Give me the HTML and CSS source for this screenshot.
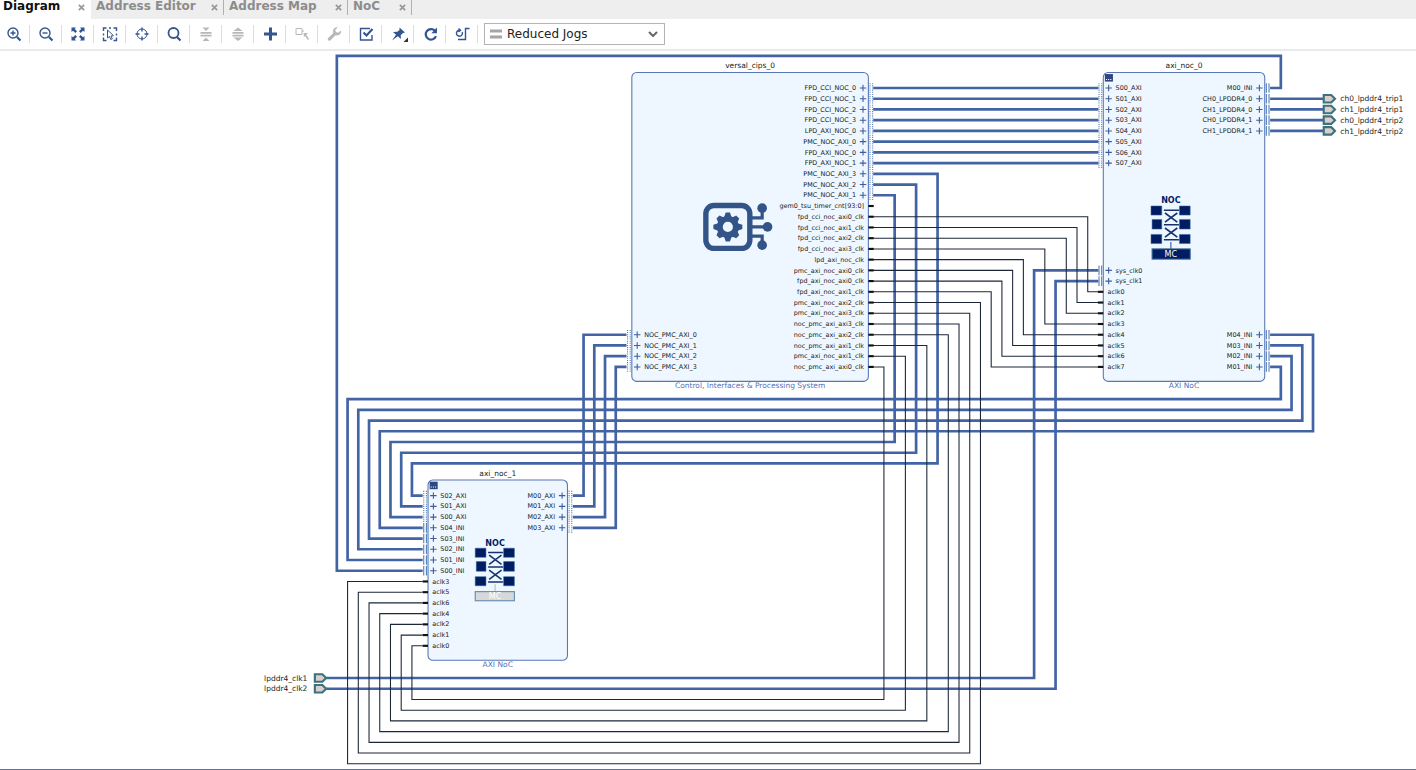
FILE: index.html
```html
<!DOCTYPE html>
<html lang="en">
<head>
<meta charset="utf-8">
<title>Block Design - Diagram</title>
<link rel="stylesheet" href="styles.css">
</head>
<body>
<nav class="tabs" aria-label="Views">
  <div class="tab tab-diagram active"><button class="tab-name">Diagram</button><button class="tab-close" aria-label="Close Diagram"><svg viewBox="0 0 8 8"><path d="M1 1l6 6M7 1L1 7"/></svg></button></div>
  <div class="tab tab-editor"><button class="tab-name">Address Editor</button><button class="tab-close" aria-label="Close Address Editor"><svg viewBox="0 0 8 8"><path d="M1 1l6 6M7 1L1 7"/></svg></button></div>
  <div class="tab tab-map"><button class="tab-name">Address Map</button><button class="tab-close" aria-label="Close Address Map"><svg viewBox="0 0 8 8"><path d="M1 1l6 6M7 1L1 7"/></svg></button></div>
  <div class="tab tab-noc"><button class="tab-name">NoC</button><button class="tab-close" aria-label="Close NoC"><svg viewBox="0 0 8 8"><path d="M1 1l6 6M7 1L1 7"/></svg></button></div>
</nav>
<div class="toolbar" role="toolbar" aria-label="Diagram tools">
  <button class="tool" aria-label="Zoom in"><svg viewBox="0 0 16 16"><circle cx="7" cy="7" r="5"/><path d="M7 4.500v5M4.500 7h5"/><path class="heavy" d="M11 11l3.500 3.500"/></svg></button>
  <button class="tool" aria-label="Zoom out"><svg viewBox="0 0 16 16"><circle cx="7" cy="7" r="5"/><path d="M4.500 7h5"/><path class="heavy" d="M11 11l3.500 3.500"/></svg></button>
  <button class="tool" aria-label="Zoom fit"><svg viewBox="0 0 16 16"><path class="fill" d="M1.500 1.500h4.500L4.800 3 7 5.300 5.300 7 3 4.800 1.500 6zM14.500 1.500V6L13 4.800 10.700 7 9 5.300 11.200 3 10 1.500zM1.500 14.500V10L3 11.200 5.300 9 7 10.700 4.800 13 6 14.500zM14.500 14.500H10l1.200-1.500L9 10.700 10.700 9l2.300 2.200 1.500-1.200z"/></svg></button>
  <button class="tool" aria-label="Select area"><svg viewBox="0 0 16 16"><path d="M1.500 5V2H4.500M7 2h2M11.500 2h3v3M1.500 7.500v2M1.500 11.500v3H4.500M14.500 7.500v2M14.500 11.500v3h-3"/><path class="thin" d="M5.500 4v8l2-1.500 1.300 3 1.500-.7L9 10l2.500-.3z"/></svg></button>
  <button class="tool" aria-label="Center"><svg viewBox="0 0 16 16"><circle class="ring" cx="8" cy="8" r="5"/><path d="M8 1.500v4M8 10.500v4M1.500 8h4M10.500 8h4"/></svg></button>
  <button class="tool" aria-label="Search"><svg viewBox="0 0 16 16"><circle class="mid" cx="7.500" cy="7" r="5"/><path class="heavy" d="M11 11l3.500 3.500"/></svg></button>
  <button class="tool" aria-label="Collapse" disabled><svg viewBox="0 0 16 16"><path class="mid" d="M2.500 6.800h11M2.500 9.700h11"/><path class="fill" d="M4.500 1.500h7L8 5zM4.500 15h7L8 11.500z"/></svg></button>
  <button class="tool" aria-label="Expand" disabled><svg viewBox="0 0 16 16"><path class="mid" d="M2.500 6.800h11M2.500 9.700h11"/><path class="fill" d="M3.500 5h9L8 1.500zM3.500 11.500h9L8 15z"/></svg></button>
  <button class="tool" aria-label="Add IP"><svg viewBox="0 0 16 16"><path class="bold" d="M8.500 1.500v13M2 8h13"/></svg></button>
  <button class="tool" aria-label="Make external" disabled><svg viewBox="0 0 16 16"><path class="thin" d="M2 2.500h6v6H2zM8 5h2"/><path d="M11 8.500l3.500 5"/><path class="fill" d="M9.500 7h4.500l-4 4z"/></svg></button>
  <button class="tool" aria-label="Customize" disabled><svg viewBox="0 0 16 16"><path class="fill" d="M14.800 4.500l-2.500 2.300-2.500-.8-.5-2.300L12 1.300C9.500.6 6.800 2.500 7 5.500L7.300 7 2 12.300c-1 1.300.9 3.200 2.300 2.200L9.500 9.300c3.300.8 6.200-1.500 5.300-4.800z"/></svg></button>
  <button class="tool" aria-label="Validate design"><svg viewBox="0 0 16 16"><path d="M12 2.500H2.500v11.500h11.500V9"/><path class="heavy" d="M5.500 6.500l3 3 6-6.500"/></svg></button>
  <button class="tool" aria-label="Pin"><svg viewBox="0 0 16 16"><path class="fill" d="M9.500 1.500l5.500 5-2 .5-2.300 2.300.3 3.700-3.200-2.700L2 14.500l4-5.800L3 6l4.300-.2L9.500 4z"/><path class="corner" d="M18 11.500v4.500h-4.500z"/></svg></button>
  <button class="tool" aria-label="Refresh"><svg viewBox="0 0 16 16"><path class="heavy" d="M13 4.800A5.300 5.300 0 1 0 14 10.200"/><path class="fill" d="M15 1.500v5.700H9.300z"/></svg></button>
  <button class="tool" aria-label="Regenerate layout"><svg viewBox="0 0 16 16"><path d="M5.500 4.200A3 3 0 1 0 8.200 6M4.500 2.500l2 1.700-2 1.800M4 13.500h7.500V2.500H15.500"/></svg></button>
  <div class="combo">
    <svg class="combo-bars" viewBox="0 0 12 10"><path d="M0 2h12M0 8h12"/></svg>
    <select aria-label="Routing style"><option>Reduced Jogs</option><option>Default View</option></select>
    <svg class="combo-arrow" viewBox="0 0 10 6"><path d="M1 1l4 4 4-4"/></svg>
  </div>
</div>
<main class="canvas">
  <svg id="diagram" viewBox="0 1 2640 1338" role="img" aria-label="Block diagram">
    <defs>
      <g id="noc-grid">
        <path class="noc-cell" d="M0 17h20v17H0zM53 17h20v17H53zM2 42h18v18H2zM53 42h20v18H53zM0 70h20v17H0zM53 70h20v17H53z"/>
        <path class="noc-line" d="M24 25h28M24 52h28M24 80h28M26 30l23 17M49 30L26 47M26 58l23 17M49 58L26 75"/>
      </g>
    </defs>
    <g id="blocks"></g>
    <g id="wires"></g>
    <g id="ports"></g>
    <g class="cips-icon" transform="translate(1311 284)">
      <rect x="5" y="5" width="82" height="80" rx="15"/>
      <path class="lead" d="M88 28h22V10M88 45h32M88 62h22v17"/>
      <circle class="dot" cx="110" cy="10" r="9"/><circle class="dot" cx="120" cy="45" r="9"/><circle class="dot" cx="110" cy="79" r="9"/>
      <g transform="translate(46 45)">
        <circle class="gear" r="15"/>
        <path class="dot" d="M-7-18L-4-27H4L7-18zM-7 18L-4 27H4L7 18zM-18-7L-27-4V4L-18 7zM18-7L27-4V4L18 7z"/>
        <path class="dot" transform="rotate(45)" d="M-7-18L-4-26H4L7-18zM-7 18L-4 26H4L7 18zM-18-7L-26-4V4L-18 7zM18-7L26-4V4L18 7z"/>
      </g>
    </g>
    <g transform="translate(2146 273)">
      <text class="noc-name" x="37" y="12">NOC</text>
      <use href="#noc-grid"/>
      <path class="noc-stem" d="M37 84v13"/>
      <rect class="mc" x="2" y="97" width="71" height="19"/>
      <text class="mc-name" x="37" y="112">MC</text>
    </g>
    <g transform="translate(886 911)">
      <text class="noc-name" x="37" y="12">NOC</text>
      <use href="#noc-grid"/>
      <path class="noc-stem off" d="M37 84v13"/>
      <rect class="mc off" x="0" y="98" width="73" height="17"/>
      <text class="mc-name" x="37" y="112">MC</text>
    </g>
  </svg>
</main>
<script src="diagram.js"></script>
</body>
</html>
```

FILE: styles.css
```css
* { box-sizing: border-box; }
body { margin: 0; background: #fff; font-family: "DejaVu Sans", sans-serif; font-size: 12px; }
button { margin: 0; padding: 0; border: 0; background: none; font: inherit; color: inherit; }
svg { display: block; }

.tabs { display: flex; height: 19px; background: #eee; overflow: hidden; }
.tab { display: flex; align-items: center; justify-content: space-between; height: 15px; padding: 0 5px 3px 5px; border-right: 1px solid #b0b0b0; color: #8c8c8c; font-weight: bold; line-height: 12px; }
.tab.active { height: 19px; padding: 0 6px 7px 3px; border: 0; background: #fff; color: #111; }
.tab-name { white-space: nowrap; }
.tab-close svg { width: 7px; height: 7px; margin-top: 3px; fill: none; stroke: #999; stroke-width: 2; }
.tab-diagram { width: 91px; }
.tab-editor { width: 133px; }
.tab-map { width: 124px; }
.tab-noc { width: 64px; }

.toolbar { display: flex; align-items: center; height: 32px; border-bottom: 2px solid #eaeaea; }
.tool { display: flex; flex: none; align-items: center; justify-content: center; width: 32px; height: 18px; border-right: 1px solid #ddd; color: #34558f; }
.tool:first-child { width: 30px; padding-right: 1px; }
.tool:disabled { color: #b8b8b8; }
.tool svg { width: 16px; height: 16px; fill: none; stroke: currentColor; stroke-width: 1.4; overflow: visible; }
.tool .thin { stroke-width: 1; }
.tool .ring { stroke-width: 1; }
.tool .mid { stroke-width: 1.8; }
.tool .heavy { stroke-width: 2.2; }
.tool .bold { stroke-width: 3; }
.tool .fill { fill: currentColor; stroke: none; }
.tool .corner { fill: #333; stroke: none; }

.combo { position: relative; width: 181px; height: 22px; margin-left: 6px; }
.combo select { width: 100%; height: 100%; padding: 0 20px 0 22px; border: 1px solid #b4b4b4; border-radius: 0; background: #fff; color: #222; font: inherit; appearance: none; }
.combo svg { position: absolute; fill: none; pointer-events: none; }
.combo-bars { top: 6px; left: 6px; width: 12px; height: 10px; stroke: #a5a5a5; stroke-width: 3; }
.combo-arrow { top: 8px; right: 7px; width: 10px; height: 6px; stroke: #666; stroke-width: 2; }

.canvas { border-bottom: 1px solid #4a7ab8; }
#diagram { width: 100%; height: auto; fill: none; }
#diagram text { fill: #222; font-size: 12px; }
#diagram .title, #diagram .external { font-size: 14px; }
#diagram .kind { font-size: 14px; fill: #5571b5; }
#diagram .title, #diagram .kind, #diagram .noc-name, #diagram .mc-name { text-anchor: middle; }
#diagram .end { text-anchor: end; }
.block { fill: #eef7ff; stroke: #5877b5; stroke-width: 2; }
.bus { stroke: #4264a5; stroke-width: 5; }
.wire { stroke: #1c2738; stroke-width: 2; }
.pin { stroke: #111; stroke-width: 4; }
.plus { stroke: #3c5c9c; stroke-width: 2; }
.mark { stroke: #4f7db8; stroke-width: 2; }
.mark.dotted { stroke-dasharray: 2 2; }
.badge { fill: #2f4780; }
.badge-dots { stroke: #fff; stroke-width: 2; }
.flag { fill: #dccfcb; stroke: #3a737e; stroke-width: 4; }
.cips-icon rect { stroke: #335488; stroke-width: 10; }
.cips-icon .lead { stroke: #335488; stroke-width: 6; }
.cips-icon .dot { fill: #335488; }
.cips-icon .gear { stroke: #335488; stroke-width: 11; }
.noc-cell { fill: #001c62; stroke: #35679a; stroke-width: 1; }
.noc-line { stroke: #14326f; stroke-width: 3; }
.noc-stem { stroke: #35578d; stroke-width: 2; }
.noc-stem.off { stroke: #bbb; }
.mc { fill: #001c62; stroke: #35679a; stroke-width: 2; }
.mc.off { fill: #d8d8d8; stroke: #5c88ae; }
#diagram .noc-name { fill: #001c62; font-size: 15px; font-weight: bold; }
#diagram .mc-name { fill: #fff; font-size: 15px; }
```

FILE: diagram.js
```js
const NS = "http://www.w3.org/2000/svg";
const GRID = 20;

function add(parent, tag, attrs, text) {
  const el = document.createElementNS(NS, tag);
  for (const key in attrs) el.setAttribute(key, attrs[key]);
  if (text) el.textContent = text;
  document.getElementById(parent).appendChild(el);
}

const blocks = [
  {
    name: "versal_cips_0", kind: "Control, Interfaces & Processing System",
    x: 1178, y: 41, w: 441, h: 576,
    groups: [
      { side: "right", type: "axi", y: 70, ports: ["FPD_CCI_NOC_0", "FPD_CCI_NOC_1", "FPD_CCI_NOC_2", "FPD_CCI_NOC_3", "LPD_AXI_NOC_0", "PMC_NOC_AXI_0", "FPD_AXI_NOC_0", "FPD_AXI_NOC_1", "PMC_NOC_AXI_3", "PMC_NOC_AXI_2", "PMC_NOC_AXI_1"] },
      { side: "right", type: "pin", y: 290, ports: ["gem0_tsu_timer_cnt[93:0]", "fpd_cci_noc_axi0_clk", "fpd_cci_noc_axi1_clk", "fpd_cci_noc_axi2_clk", "fpd_cci_noc_axi3_clk", "lpd_axi_noc_clk", "pmc_axi_noc_axi0_clk", "fpd_axi_noc_axi0_clk", "fpd_axi_noc_axi1_clk", "pmc_axi_noc_axi2_clk", "pmc_axi_noc_axi3_clk", "noc_pmc_axi_axi3_clk", "noc_pmc_axi_axi2_clk", "noc_pmc_axi_axi1_clk", "pmc_axi_noc_axi1_clk", "noc_pmc_axi_axi0_clk"] },
      { side: "left", type: "axi", y: 530, ports: ["NOC_PMC_AXI_0", "NOC_PMC_AXI_1", "NOC_PMC_AXI_2", "NOC_PMC_AXI_3"] }
    ]
  },
  {
    name: "axi_noc_0", kind: "AXI NoC", badge: true,
    x: 2057, y: 41, w: 301, h: 576,
    groups: [
      { side: "left", type: "axi", y: 70, ports: ["S00_AXI", "S01_AXI", "S02_AXI", "S03_AXI", "S04_AXI", "S05_AXI", "S06_AXI", "S07_AXI"] },
      { side: "left", type: "bus", y: 410, ports: ["sys_clk0", "sys_clk1"] },
      { side: "left", type: "pin", y: 450, ports: ["aclk0", "aclk1", "aclk2", "aclk3", "aclk4", "aclk5", "aclk6", "aclk7"] },
      { side: "right", type: "bus", y: 70, ports: ["M00_INI", "CH0_LPDDR4_0", "CH1_LPDDR4_0", "CH0_LPDDR4_1", "CH1_LPDDR4_1"] },
      { side: "right", type: "bus", y: 530, ports: ["M04_INI", "M03_INI", "M02_INI", "M01_INI"] }
    ]
  },
  {
    name: "axi_noc_1", kind: "AXI NoC", badge: true,
    x: 798, y: 801, w: 260, h: 336,
    groups: [
      { side: "left", type: "axi", y: 830, ports: ["S02_AXI", "S01_AXI", "S00_AXI"] },
      { side: "left", type: "bus", y: 890, ports: ["S04_INI", "S03_INI", "S02_INI", "S01_INI", "S00_INI"] },
      { side: "left", type: "pin", y: 990, ports: ["aclk3", "aclk5", "aclk6", "aclk4", "aclk2", "aclk1", "aclk0"] },
      { side: "right", type: "axi", y: 830, ports: ["M00_AXI", "M01_AXI", "M02_AXI", "M03_AXI"] }
    ]
  }
];

function drawPort(block, group, name, y) {
  const left = group.side === "left";
  const edge = left ? block.x : block.x + block.w;
  const inward = left ? 1 : -1;
  const at = d => edge + inward * d;
  const cls = left ? "port" : "port end";
  if (group.type === "pin") {
    add("ports", "path", { class: "pin", d: `M${at(0)} ${y}H${at(-10)}` });
    add("ports", "text", { class: cls, x: at(8), y: y + 4 }, name);
    return;
  }
  add("ports", "path", { class: "plus", d: `M${at(4)} ${y}H${at(16)}M${at(10)} ${y - 6}V${y + 6}` });
  add("ports", "text", { class: cls, x: at(23), y: y + 4 }, name);
  const mark = group.type === "axi" ? "mark dotted" : "mark";
  add("ports", "path", { class: mark, d: `M${at(-3)} ${y - 9}V${y + 9}M${at(-8)} ${y - 9}V${y + 9}` });
}

for (const b of blocks) {
  const mid = b.x + b.w / 2;
  add("blocks", "rect", { class: "block", x: b.x, y: b.y, width: b.w, height: b.h, rx: 9 });
  add("blocks", "text", { class: "title", x: mid, y: b.y - 8 }, b.name);
  add("blocks", "text", { class: "kind", x: mid, y: b.y + b.h + 13 }, b.kind);
  if (b.badge) {
    add("blocks", "rect", { class: "badge", x: b.x + 3, y: b.y + 3, width: 15, height: 14 });
    add("blocks", "path", { class: "badge-dots", d: `M${b.x + 5} ${b.y + 13}h2m2 0h2m2 0h2` });
  }
  for (const g of b.groups) g.ports.forEach((p, i) => drawPort(b, g, p, g.y + i * GRID));
}

const buses = [
  "M2368 70H2388V10H628V970H788",
  "M1628 230H1748V770H768V830H788",
  "M1628 250H1708V750H748V850H788",
  "M1628 270H1668V730H728V870H788",
  "M2368 530H2448V710H708V890H788",
  "M2368 550H2428V690H688V910H788",
  "M2368 570H2408V670H668V930H788",
  "M2368 590H2388V650H648V950H788",
  "M1068 830H1088V530H1168",
  "M1068 850H1108V550H1168",
  "M1068 870H1128V570H1168",
  "M1068 890H1148V590H1168",
  "M608 1170H1928V410H2048",
  "M608 1190H1968V430H2048"
];
for (let i = 0; i < 8; i++) buses.push(`M1628 ${70 + i * GRID}H2048`);
for (let i = 0; i < 4; i++) buses.push(`M2368 ${90 + i * GRID}H2468`);
buses.forEach(d => add("wires", "path", { class: "bus", d }));

/* Clocks to axi_noc_0, one vertical lane each */
[2028, 2008, 1988, 1948, 1908, 1888, 1868, 1848].forEach((lane, i) =>
  add("wires", "path", { class: "wire", d: `M1628 ${310 + i * GRID}H${lane}V${450 + i * GRID}H2048` }));

/* Clocks to axi_noc_1, routed below both blocks */
[1828, 1808, 1788, 1768, 1728, 1688, 1648].forEach((lane, i) =>
  add("wires", "path", { class: "wire", d: `M1628 ${470 + i * GRID}H${lane}V${1330 - i * GRID}H${648 + i * GRID}V${990 + i * GRID}H788` }));

function drawExternal(x, y, name, textX, cls) {
  add("ports", "path", { class: "flag", d: `M${x} ${y - 7}h14l7 7l-7 7h-14z` });
  add("ports", "text", { class: cls, x: textX, y: y + 5 }, name);
}
["ch0_lpddr4_trip1", "ch1_lpddr4_trip1", "ch0_lpddr4_trip2", "ch1_lpddr4_trip2"].forEach((n, i) =>
  drawExternal(2468, 90 + i * GRID, n, 2499, "external"));
["lpddr4_clk1", "lpddr4_clk2"].forEach((n, i) =>
  drawExternal(587, 1170 + i * GRID, n, 573, "external end"));
```
